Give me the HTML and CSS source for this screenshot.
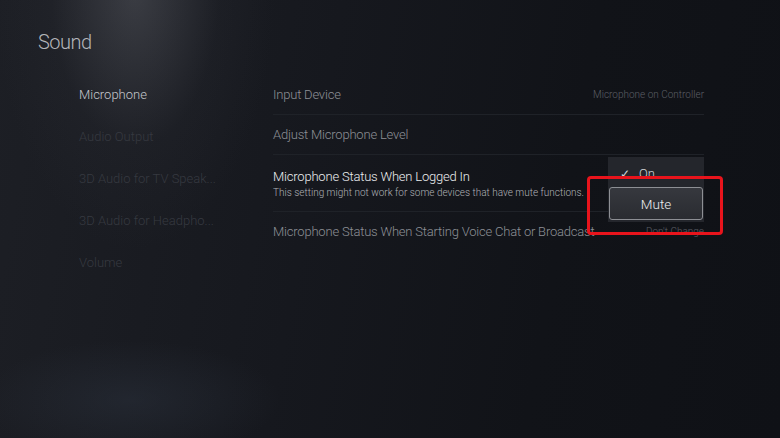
FILE: index.html
```html
<!DOCTYPE html>
<html lang="en">
<head>
    <meta charset="UTF-8">
    <title>Sound</title>
    <link rel="stylesheet" href="styles.css">
</head>
<body>
    <div class="screen">
        <h1 class="title">Sound</h1>
        <div class="content">
            <ul class="side-nav">
                <li class="nav-item active">Microphone</li>
                <li class="nav-item">Audio Output</li>
                <li class="nav-item">3D Audio for TV Speak...</li>
                <li class="nav-item">3D Audio for Headpho...</li>
                <li class="nav-item">Volume</li>
            </ul>
            <div class="settings">
                <div class="row">
                    <span class="label">Input Device</span>
                    <span class="value">Microphone on Controller</span>
                </div>
                <div class="row">
                    <span class="label">Adjust Microphone Level</span>
                </div>
                <div class="row row-tall">
                    <div>
                        <p class="label bright">Microphone Status When Logged In</p>
                        <p class="hint">This setting might not work for some devices that have mute functions.</p>
                    </div>
                </div>
                <div class="row row-last">
                    <span class="label">Microphone Status When Starting Voice Chat or Broadcast</span>
                    <span class="value">Don't Change</span>
                </div>

                <div class="menu">
                    <div class="menu-item"><span class="check">&#10003;</span>On</div>
                    <div class="menu-item focused">Mute</div>
                </div>
                <div class="highlight"></div>
            </div>
        </div>
    </div>
</body>
</html>
```

FILE: styles.css
```css
body{
    margin: 0;
    background-color: #13151b;
    font-family: Roboto, "Open Sans", sans-serif;
    font-weight: 300;
}
.screen{
    width: 780px;
    height: 438px;
    overflow: hidden;
    box-sizing: border-box;
    padding: 30px 0 0 38px;
    background:
        radial-gradient(ellipse 140px 260px at 135px -10px, rgba(120, 122, 130, 0.35), rgba(60, 62, 70, 0.12) 60%, transparent 100%),
        radial-gradient(ellipse 150px 60px at 130px 400px, rgba(45, 52, 64, 0.45), transparent 100%),
        linear-gradient(100deg, #1d1f25 0%, #16181e 40%, #111318 70%, #0f1116 100%);
}
.title{
    margin: 0;
    font-size: 20px;
    font-weight: 300;
    letter-spacing: -0.5px;
    color: #b3b5ba;
    line-height: 24px;
}
.content{
    display: flex;
    margin-top: 20px;
}
.side-nav{
    list-style: none;
    margin: 0;
    padding: 0 0 0 41px;
    width: 194px;
}
.nav-item{
    height: 42px;
    line-height: 42px;
    font-size: 13px;
    color: #363940;
    white-space: nowrap;
}
.nav-item.active{
    color: #c6c8cd;
}
.settings{
    position: relative;
    width: 431px;
    padding-top: 1px;
}
.row{
    display: flex;
    justify-content: space-between;
    align-items: center;
    height: 39px;
    border-bottom: 1px solid #1f2228;
}
.row-last{
    border-bottom: none;
}
.row-tall{
    height: 56px;
}
.label{
    margin: 0;
    font-size: 13px;
    letter-spacing: -0.2px;
    color: #8d9096;
    white-space: nowrap;
}
.label.bright{
    color: #eceef0;
}
.hint{
    margin: 3px 0 0;
    font-size: 10px;
    color: #b0b2b7;
    white-space: nowrap;
}
.value{
    font-size: 10px;
    color: #5c5f66;
}
.menu{
    position: absolute;
    top: 83px;
    left: 335px;
    width: 96px;
    height: 65px;
    background-color: #24262c;
}
.menu-item{
    display: flex;
    align-items: center;
    justify-content: center;
    height: 30px;
    font-size: 13px;
    color: #d4d6da;
}
.menu-item:first-child{
    box-sizing: border-box;
    justify-content: flex-start;
    padding: 3px 0 0 12px;
}
.check{
    margin-right: 9px;
    font-size: 12px;
}
.menu-item.focused{
    margin: 0 1px;
    height: 31px;
    border: 1.5px solid #8d8f94;
    border-radius: 3px;
    background: linear-gradient(180deg, #36383e, #2a2c31);
    color: #eceef0;
    font-size: 13.5px;
}
.highlight{
    position: absolute;
    top: 102px;
    left: 314px;
    width: 130px;
    height: 53px;
    border: 3px solid #e8141c;
    border-radius: 4px;
}
```
